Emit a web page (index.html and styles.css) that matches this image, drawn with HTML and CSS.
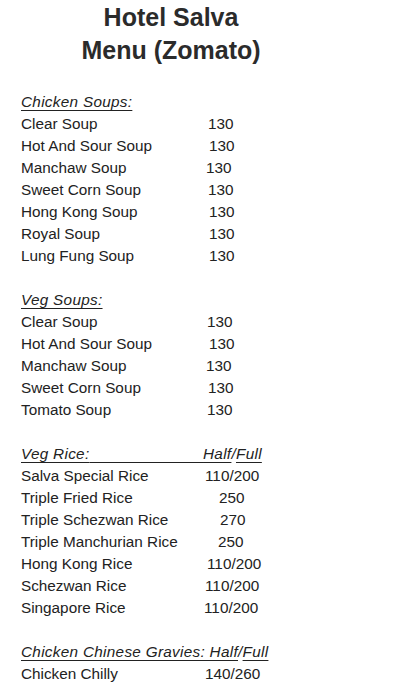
FILE: index.html
```html
<!DOCTYPE html>
<html lang="en">
<head>
    <meta charset="UTF-8">
    <meta name="viewport" content="width=device-width, initial-scale=1.0">
    <title>Hotel Salva Menu</title>
    <link rel="stylesheet" href="styles.css">
</head>
<body>
    <div class="note">
        <h1 class="title">Hotel Salva<br>Menu (Zomato)</h1>

        <section class="group">
            <div class="head"><u>Chicken Soups:</u></div>
            <div class="row"><span>Clear Soup</span><span class="price s4">130</span></div>
            <div class="row"><span>Hot And Sour Soup</span><span class="price s5">130</span></div>
            <div class="row"><span>Manchaw Soup</span><span class="price s2">130</span></div>
            <div class="row"><span>Sweet Corn Soup</span><span class="price s4">130</span></div>
            <div class="row"><span>Hong Kong Soup</span><span class="price s5">130</span></div>
            <div class="row"><span>Royal Soup</span><span class="price s5">130</span></div>
            <div class="row"><span>Lung Fung Soup</span><span class="price s5">130</span></div>
        </section>

        <section class="group">
            <div class="head"><u>Veg Soups:</u></div>
            <div class="row"><span>Clear Soup</span><span class="price s3">130</span></div>
            <div class="row"><span>Hot And Sour Soup</span><span class="price s5">130</span></div>
            <div class="row"><span>Manchaw Soup</span><span class="price s2">130</span></div>
            <div class="row"><span>Sweet Corn Soup</span><span class="price s4">130</span></div>
            <div class="row"><span>Tomato Soup</span><span class="price s3">130</span></div>
        </section>

        <section class="group">
            <div class="head"><u>Veg Rice:<span class="wide"> </span>Half</u>/<u>Full</u></div>
            <div class="row"><span>Salva Special Rice</span><span class="price s1">110/200</span></div>
            <div class="row"><span>Triple Fried Rice</span><span class="price s15">250</span></div>
            <div class="row"><span>Triple Schezwan Rice</span><span class="price s16">270</span></div>
            <div class="row"><span>Triple Manchurian Rice</span><span class="price s14">250</span></div>
            <div class="row"><span>Hong Kong Rice</span><span class="price s3">110/200</span></div>
            <div class="row"><span>Schezwan Rice</span><span class="price s1">110/200</span></div>
            <div class="row"><span>Singapore Rice</span><span class="price">110/200</span></div>
        </section>

        <section class="group">
            <div class="head"><u>Chicken Chinese Gravies: Half</u>/<u>Full</u></div>
            <div class="row"><span>Chicken Chilly</span><span class="price s1">140/260</span></div>
        </section>
    </div>
</body>
</html>
```

FILE: styles.css
```css
html, body {
    margin: 0;
    background: #fff;
    font-family: "Liberation Sans", Arial, Helvetica, sans-serif;
    color: #222;
}

.note {
    padding: 1px 0 0 21px;
}

.title {
    width: 300px;
    margin: 0 0 24px 0;
    font-size: 25px;
    line-height: 33px;
    font-weight: bold;
    text-align: center;
    color: #2b2b2b;
}

.group {
    margin-bottom: 22px;
}

.head,
.row {
    font-size: 15.3px;
    line-height: 22px;
}

.head {
    font-style: italic;
    white-space: pre;
    letter-spacing: 0.3px;
}

.head u {
    text-decoration-thickness: 1px;
    text-underline-offset: 2.5px;
}

/* the spaces between "Veg Rice:" and "Half" are underlined too */
.head .wide {
    word-spacing: 109px;
}

.row {
    display: grid;
    grid-template-columns: 183px auto;
}

/* nudges for the hand-spaced prices */
.price.s1 { padding-left: 1px; }
.price.s2 { padding-left: 2px; }
.price.s3 { padding-left: 3px; }
.price.s4 { padding-left: 4px; }
.price.s5 { padding-left: 5px; }
.price.s14 { padding-left: 14px; }
.price.s15 { padding-left: 15px; }
.price.s16 { padding-left: 16px; }
```
